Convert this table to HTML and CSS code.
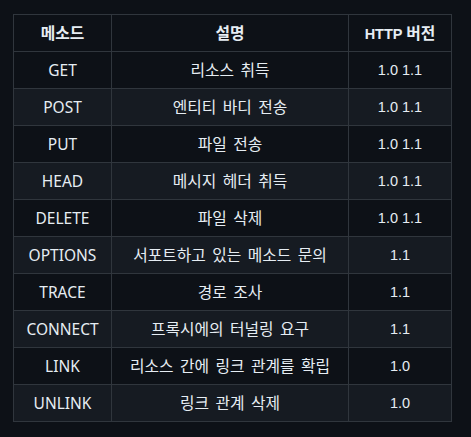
FILE: index.html
```html
<!DOCTYPE html>
<html lang="ko">
<head>
<meta charset="utf-8">
<link rel="stylesheet" href="styles.css">
</head>
<body>
<table class="methods">
  <colgroup>
    <col class="c1"><col class="c2"><col class="c3">
  </colgroup>
  <thead>
    <tr><th class="ko">메소드</th><th class="ko">설명</th><th class="ver">HTTP <span class="ko">버전</span></th></tr>
  </thead>
  <tbody>
    <tr><td>GET</td><td class="ko">리소스 취득</td><td class="ver">1.0 1.1</td></tr>
    <tr><td>POST</td><td class="ko">엔티티 바디 전송</td><td class="ver">1.0 1.1</td></tr>
    <tr><td>PUT</td><td class="ko">파일 전송</td><td class="ver">1.0 1.1</td></tr>
    <tr><td>HEAD</td><td class="ko">메시지 헤더 취득</td><td class="ver">1.0 1.1</td></tr>
    <tr><td>DELETE</td><td class="ko">파일 삭제</td><td class="ver">1.0 1.1</td></tr>
    <tr><td>OPTIONS</td><td class="ko">서포트하고 있는 메소드 문의</td><td class="ver">1.1</td></tr>
    <tr><td>TRACE</td><td class="ko">경로 조사</td><td class="ver">1.1</td></tr>
    <tr><td>CONNECT</td><td class="ko">프록시에의 터널링 요구</td><td class="ver">1.1</td></tr>
    <tr><td>LINK</td><td class="ko">리소스 간에 링크 관계를 확립</td><td class="ver">1.0</td></tr>
    <tr><td>UNLINK</td><td class="ko">링크 관계 삭제</td><td class="ver">1.0</td></tr>
  </tbody>
</table>
</body>
</html>
```

FILE: styles.css
```css
html, body {
  background: #0d1117;
}
body {
  margin: 0;
  padding: 14px 0 0 13px;
  color: #e6edf3;
  font-family: "Noto Sans", "Noto Sans CJK KR", sans-serif;
  font-size: 15.5px;
}
.methods {
  border-collapse: collapse;
  table-layout: fixed;
  width: 438px;
}
.c1 { width: 98px; }
.c2 { width: 237px; }
.c3 { width: 103px; }
.methods th,
.methods td {
  border: 1px solid #30363d;
  padding: 0 4px;
  height: 37px;
  line-height: 24px;
  text-align: center;
  white-space: nowrap;
  box-sizing: border-box;
}
.methods th {
  font-weight: 700;
}
.methods .ko {
  font-family: "Noto Sans CJK KR", sans-serif;
  font-size: 15.8px;
  word-spacing: 2px;
}
.methods .ver {
  font-family: "Liberation Sans", "Noto Sans CJK KR", sans-serif;
  font-size: 14.5px;
}
.methods .ver .ko {
  font-size: 15.8px;
}
.methods tbody tr:nth-child(2n) {
  background: #161b22;
}
.methods thead tr {
  background: #0d1117;
}
```
